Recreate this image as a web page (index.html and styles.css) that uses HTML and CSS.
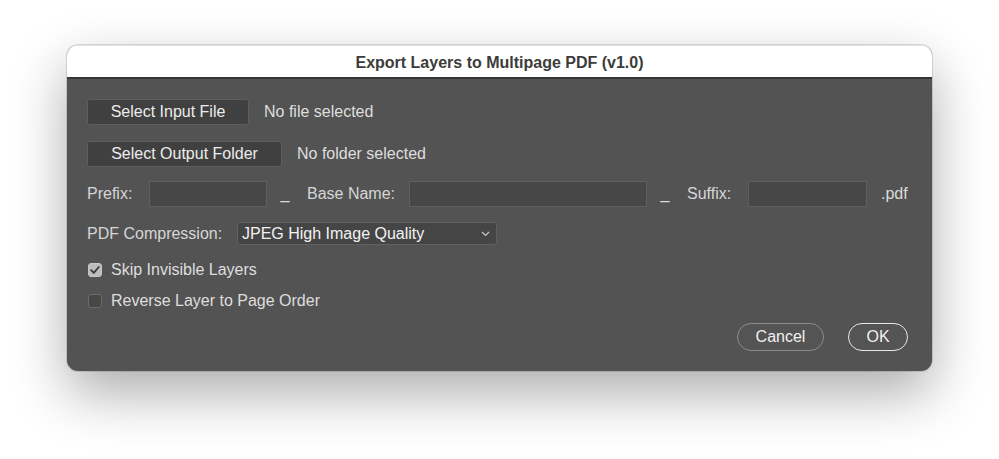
FILE: index.html
```html
<!DOCTYPE html>
<html lang="en">
<head>
<meta charset="utf-8">
<title>Export Layers to Multipage PDF</title>
<link rel="stylesheet" href="styles.css">
</head>
<body>
<div class="window">
  <div class="titlebar">Export Layers to Multipage PDF (v1.0)</div>
  <div class="panel">
    <div class="row row-input">
      <button class="btn btn-input">Select Input File</button>
      <span class="status">No file selected</span>
    </div>
    <div class="row row-output">
      <button class="btn btn-output">Select Output Folder</button>
      <span class="status">No folder selected</span>
    </div>
    <div class="row row-names">
      <span class="lbl lbl-prefix">Prefix:</span>
      <span class="field f-prefix"></span>
      <span class="sep">_</span>
      <span class="lbl lbl-base">Base Name:</span>
      <span class="field f-base"></span>
      <span class="sep">_</span>
      <span class="lbl lbl-suffix">Suffix:</span>
      <span class="field f-suffix"></span>
      <span class="ext">.pdf</span>
    </div>
    <div class="row row-compression">
      <span class="lbl lbl-comp">PDF Compression:</span>
      <div class="select">
        <span>JPEG High Image Quality</span>
        <svg class="chev" width="9" height="6" viewBox="0 0 9 6"><path d="M1 1 L4.5 4.5 L8 1" fill="none" stroke="#c8c8c8" stroke-width="1.2"/></svg>
      </div>
    </div>
    <div class="row row-check1">
      <span class="check checked">
        <svg width="14" height="14" viewBox="0 0 14 14"><path d="M3.2 7.2 L5.8 9.8 L10.8 4" fill="none" stroke="#3a3a3a" stroke-width="1.9" stroke-linecap="round" stroke-linejoin="round"/></svg>
      </span>
      <span class="check-label">Skip Invisible Layers</span>
    </div>
    <div class="row row-check2">
      <span class="check"></span>
      <span class="check-label">Reverse Layer to Page Order</span>
    </div>
    <div class="row row-actions">
      <button class="pill pill-cancel">Cancel</button>
      <button class="pill pill-ok">OK</button>
    </div>
  </div>
</div>
</body>
</html>
```
FILE: styles.css
```css
html, body {
  margin: 0;
  padding: 0;
  background: #ffffff;
}
body {
  min-height: 100vh;
  box-sizing: border-box;
  padding: 45px 0 0 67px;
  font-family: "Liberation Sans", Arial, sans-serif;
  font-size: 16px;
  color: #dcdcdc;
}
.window {
  width: 865px;
  border-radius: 11px;
  overflow: hidden;
  background: #535353;
  box-shadow: 0 0 0 1px rgba(0,0,0,0.12), 0 22px 55px rgba(0,0,0,0.33);
}
.titlebar {
  height: 31px;
  line-height: 33px;
  background: #ffffff;
  border-top: 1px solid #e2e2e2;
  border-bottom: 2px solid #353535;
  text-align: center;
  font-weight: bold;
  font-size: 16px;
  color: #3c3c3c;
}
.panel {
  padding: 20px 24px 20px 20px;
  display: flex;
  flex-direction: column;
}
.row {
  display: flex;
  align-items: center;
}
.row-output { margin-top: 16px; }
.row-names { margin-top: 14px; }
.row-compression { margin-top: 15px; }
.row-check1 { margin-top: 15px; height: 20px; }
.row-check2 { margin-top: 11px; height: 20px; }
.row-actions { margin-top: 12px; justify-content: flex-end; gap: 24px; }

.btn {
  height: 26px;
  box-sizing: border-box;
  background: #404040;
  border: 1px solid #5d5d5d;
  border-radius: 2px;
  color: #ececec;
  font-family: inherit;
  font-size: 16px;
  padding: 0;
}
.btn-input { width: 162px; }
.btn-output { width: 195px; }
.status {
  margin-left: 15px;
  color: #dedede;
}
.lbl { color: #d6d6d6; }
.lbl-prefix { width: 62px; }
.lbl-base { width: 102px; }
.lbl-suffix { width: 61px; }
.lbl-comp { width: 150px; }
.field {
  height: 26px;
  box-sizing: border-box;
  background: #474747;
  border: 1px solid #5e5e5e;
}
.f-prefix { width: 118px; }
.f-base { width: 238px; }
.f-suffix { width: 119px; }
.sep {
  width: 40px;
  text-align: center;
  color: #dcdcdc;
  padding-right: 4px;
  box-sizing: border-box;
}
.ext {
  margin-left: 14px;
  color: #dcdcdc;
}
.select {
  width: 260px;
  height: 23px;
  box-sizing: border-box;
  background: #454545;
  border: 1px solid #606060;
  border-radius: 3px;
  display: flex;
  align-items: center;
  justify-content: space-between;
  padding: 0 6px 0 4px;
  color: #f2f2f2;
}
.chev { margin-top: 1px; }
.check {
  width: 14px;
  height: 14px;
  box-sizing: border-box;
  margin-left: 1px;
  border-radius: 3px;
  background: #474747;
  border: 1px solid #6c6c6c;
  display: flex;
}
.check.checked {
  background: #bdbdbd;
  border-color: #c6c6c6;
}
.check.checked svg { margin: -1px; }
.check-label {
  margin-left: 9px;
  color: #dedede;
}
.pill {
  height: 28px;
  box-sizing: border-box;
  border-radius: 14px;
  background: #545454;
  font-family: inherit;
  font-size: 16px;
  color: #f0f0f0;
  padding: 0;
}
.pill-cancel {
  width: 87px;
  border: 1px solid #8d8d8d;
}
.pill-ok {
  width: 60px;
  border: 1.5px solid #e8e8e8;
}
```
